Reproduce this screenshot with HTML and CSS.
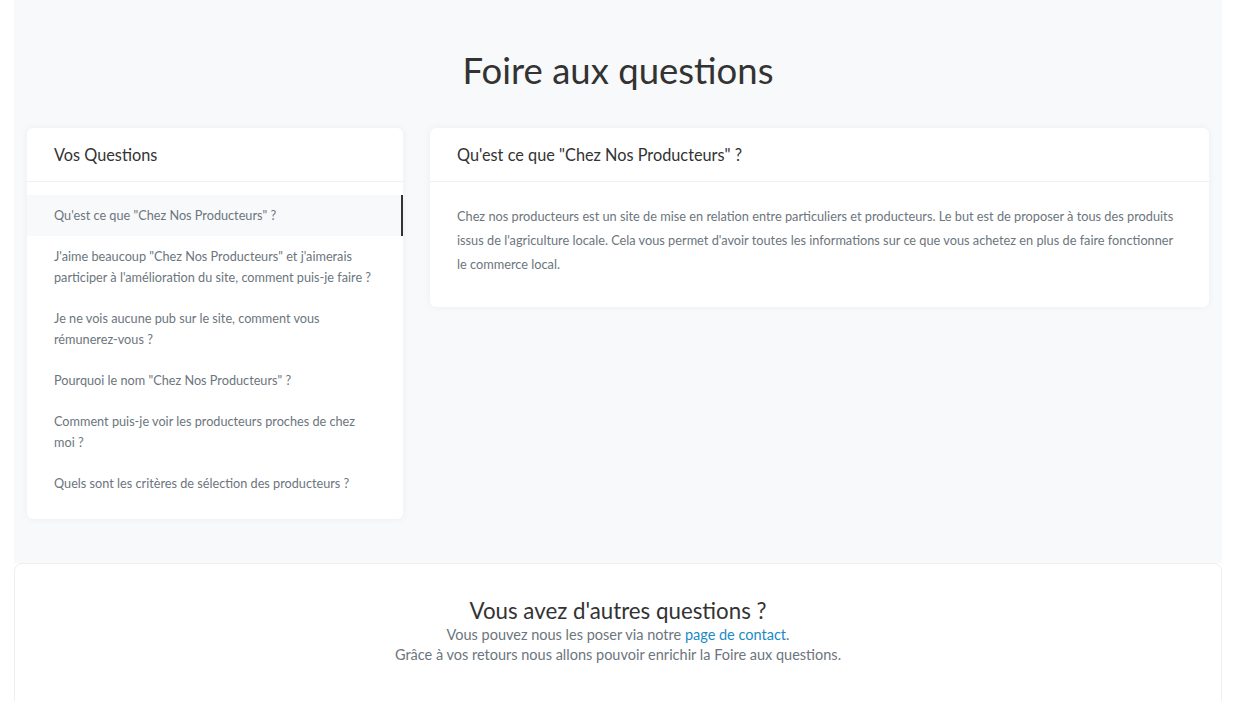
FILE: index.html
```html
<!DOCTYPE html>
<html lang="fr">
<head>
    <meta charset="UTF-8">
    <meta name="viewport" content="width=device-width, initial-scale=1.0">
    <title>Foire aux questions</title>
    <link rel="stylesheet" href="styles.css">
</head>
<body>
    <div class="page">
        <section class="faq">
            <h1 class="faq-title">Foire aux questions</h1>
            <div class="faq-grid">
                <div class="card">
                    <div class="card-header">Vos Questions</div>
                    <ul class="questions">
                        <li class="question active">Qu'est ce que "Chez Nos Producteurs" ?</li>
                        <li class="question">J'aime beaucoup "Chez Nos Producteurs" et j'aimerais participer à l'amélioration du site, comment puis-je faire ?</li>
                        <li class="question">Je ne vois aucune pub sur le site, comment vous rémunerez-vous ?</li>
                        <li class="question">Pourquoi le nom "Chez Nos Producteurs" ?</li>
                        <li class="question">Comment puis-je voir les producteurs proches de chez moi ?</li>
                        <li class="question">Quels sont les critères de sélection des producteurs ?</li>
                    </ul>
                </div>
                <div class="answer-col">
                    <div class="card">
                        <div class="card-header">Qu'est ce que "Chez Nos Producteurs" ?</div>
                        <div class="answer">Chez nos producteurs est un site de mise en relation entre particuliers et producteurs. Le but est de proposer à tous des produits issus de l'agriculture locale. Cela vous permet d'avoir toutes les informations sur ce que vous achetez en plus de faire fonctionner le commerce local.</div>
                    </div>
                </div>
            </div>
        </section>
        <section class="more">
            <h2 class="more-title">Vous avez d'autres questions ?</h2>
            <p class="more-text">Vous pouvez nous les poser via notre <a href="#">page de contact</a>.<br>Grâce à vos retours nous allons pouvoir enrichir la Foire aux questions.</p>
        </section>
    </div>
</body>
</html>
```

FILE: styles.css
```css
body {
    margin: 0;
    background: #fff;
    font-family: "Lato", "Noto Sans", sans-serif;
    color: #333;
}
.page {
    width: 1208px;
    margin-left: 14px;
}
.faq {
    background: #f8f9fa;
    padding: 49px 13px 44px;
}
.faq-title {
    margin: 0 0 36px;
    text-align: center;
    font-size: 36.5px;
    line-height: 43px;
    font-weight: 400;
    color: #333;
}
.faq-grid {
    display: grid;
    grid-template-columns: 376px 1fr;
    gap: 27px;
    align-items: start;
}
.card {
    background: #fff;
    border-radius: 6px;
    box-shadow: 0 0 8px rgba(0, 0, 0, 0.05);
}
.card-header {
    padding: 17px 27px 16px;
    font-size: 16.3px;
    line-height: 20px;
    color: #333;
    border-bottom: 1px solid #f0f0f0;
}
.questions {
    list-style: none;
    margin: 0;
    padding: 13px 0 15px;
}
.question {
    padding: 10px 27px;
    font-size: 12.7px;
    line-height: 21px;
    color: #6c757d;
}
.question.active {
    background: #f8f9fa;
    border-right: 2px solid #333;
}
.answer {
    padding: 22px 27px 31px;
    font-size: 12.75px;
    line-height: 24px;
    color: #6c757d;
}
.more {
    background: #fff;
    border: 1px solid #eceef0;
    border-radius: 8px;
    padding: 34px 20px 60px;
    text-align: center;
}
.more-title {
    margin: 0;
    font-size: 22.3px;
    line-height: 26px;
    font-weight: 400;
    color: #333;
}
.more-text {
    margin: 1px 0 0;
    font-size: 14.5px;
    line-height: 20px;
    color: #6c757d;
}
.more-text a {
    color: #1a8ac6;
    text-decoration: none;
}
```
